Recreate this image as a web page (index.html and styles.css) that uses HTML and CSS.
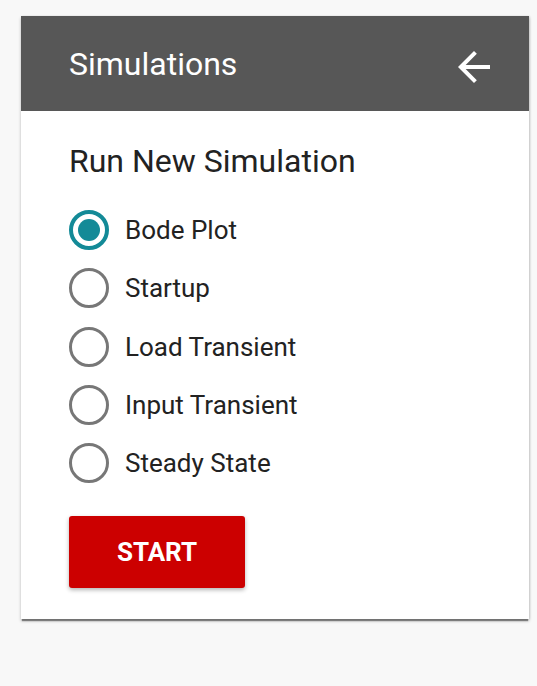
FILE: index.html
```html
<!DOCTYPE html>
<html lang="en">
<head>
<meta charset="utf-8">
<title>Simulations</title>
<link rel="stylesheet" href="styles.css">
</head>
<body>
<div class="card">
  <div class="card-header">
    <h1 class="card-title">Simulations</h1>
    <button class="back-btn" aria-label="Back">
      <svg viewBox="0 0 24 24" width="48" height="48"><path fill="#fff" d="M20 11H7.83l5.59-5.59L12 4l-8 8 8 8 1.41-1.41L7.83 13H20v-2z"/></svg>
    </button>
  </div>
  <div class="card-body">
    <h2 class="section-title">Run New Simulation</h2>
    <div class="radio-list">
      <label class="radio-row"><span class="radio checked"></span><span class="radio-label">Bode Plot</span></label>
      <label class="radio-row"><span class="radio"></span><span class="radio-label">Startup</span></label>
      <label class="radio-row"><span class="radio"></span><span class="radio-label">Load Transient</span></label>
      <label class="radio-row"><span class="radio"></span><span class="radio-label">Input Transient</span></label>
      <label class="radio-row"><span class="radio"></span><span class="radio-label">Steady State</span></label>
    </div>
    <button class="start-btn">START</button>
  </div>
</div>
</body>
</html>
```
FILE: styles.css
```css
html, body {
  margin: 0;
  padding: 0;
  background: #f8f8f8;
  font-family: Roboto, "Liberation Sans", Arial, sans-serif;
}
body {
  padding: 16px 8px 48px 21px;
  min-height: 100vh;
  box-sizing: border-box;
}
.card {
  width: 508px;
  background: #fff;
  box-shadow: 0 3px 1px -1px rgba(0, 0, 0, 0.4), 0 2px 3px rgba(0, 0, 0, 0.25), 1px 0 2px rgba(0, 0, 0, 0.1);
}
.card-header {
  height: 95px;
  background: #575757;
  display: flex;
  align-items: center;
  justify-content: space-between;
  padding: 0 31px 0 48px;
  box-sizing: border-box;
}
.card-title {
  margin: 0;
  color: #fff;
  font-weight: 400;
  font-size: 32px;
  line-height: 36px;
}
.back-btn {
  background: none;
  border: 0;
  padding: 0;
  width: 48px;
  height: 48px;
  margin-top: 7px;
  display: block;
}
.back-btn svg {
  display: block;
}
.card-body {
  padding: 32px 48px 31px 48px;
}
.section-title {
  margin: 0;
  font-weight: 400;
  font-size: 32px;
  line-height: 36px;
  color: #222;
}
.radio-list {
  display: flex;
  flex-direction: column;
  margin-top: 22px;
}
.radio-row {
  display: flex;
  align-items: center;
  height: 58.25px;
  gap: 16px;
}
.radio {
  width: 40px;
  height: 40px;
  box-sizing: border-box;
  border: 3.5px solid #777;
  border-radius: 50%;
  display: flex;
  align-items: center;
  justify-content: center;
  flex: none;
}
.radio.checked {
  border: 4px solid #138a97;
}
.radio.checked::after {
  content: "";
  width: 22px;
  height: 22px;
  border-radius: 50%;
  background: #138a97;
}
.radio-label {
  font-size: 26px;
  color: #222;
  line-height: 30px;
}
.start-btn {
  margin-top: 24px;
  width: 176px;
  height: 72px;
  background: #cc0000;
  color: #fff;
  border: 0;
  border-radius: 3px;
  font-family: Roboto, "Liberation Sans", Arial, sans-serif;
  font-weight: 700;
  font-size: 26px;
  box-shadow: 0 2px 4px rgba(0, 0, 0, 0.3);
  display: block;
}
```
